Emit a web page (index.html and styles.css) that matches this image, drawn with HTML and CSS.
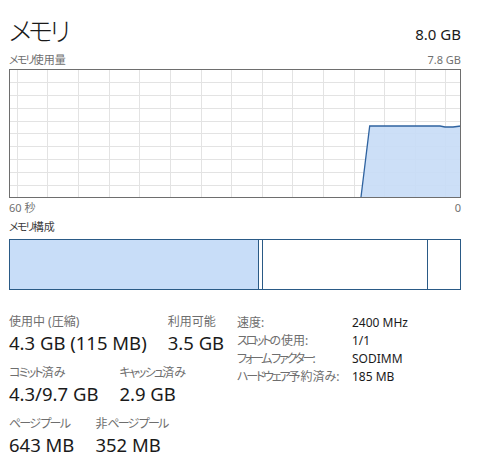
FILE: index.html
```html
<!DOCTYPE html>
<html lang="ja">
<head>
<meta charset="utf-8">
<link rel="stylesheet" href="styles.css">
</head>
<body>
<div class="page">
  <div class="head">
    <div class="title">メモリ</div>
    <div class="total">8.0 GB</div>
  </div>
  <div class="caption">
    <span><span class="kn">メモリ</span>使用量</span>
    <span>7.8 GB</span>
  </div>
  <svg class="graph" width="452" height="129" viewBox="0 0 452 129">
    <g class="grid">
      <line x1="8.5" y1="0" x2="8.5" y2="129"/>
      <line x1="38.5" y1="0" x2="38.5" y2="129"/>
      <line x1="69.5" y1="0" x2="69.5" y2="129"/>
      <line x1="100.5" y1="0" x2="100.5" y2="129"/>
      <line x1="130.5" y1="0" x2="130.5" y2="129"/>
      <line x1="161.5" y1="0" x2="161.5" y2="129"/>
      <line x1="192.5" y1="0" x2="192.5" y2="129"/>
      <line x1="222.5" y1="0" x2="222.5" y2="129"/>
      <line x1="253.5" y1="0" x2="253.5" y2="129"/>
      <line x1="283.5" y1="0" x2="283.5" y2="129"/>
      <line x1="314.5" y1="0" x2="314.5" y2="129"/>
      <line x1="345.5" y1="0" x2="345.5" y2="129"/>
      <line x1="375.5" y1="0" x2="375.5" y2="129"/>
      <line x1="406.5" y1="0" x2="406.5" y2="129"/>
      <line x1="436.5" y1="0" x2="436.5" y2="129"/>
      <line x1="0" y1="13.5" x2="452" y2="13.5"/>
      <line x1="0" y1="26.5" x2="452" y2="26.5"/>
      <line x1="0" y1="39.5" x2="452" y2="39.5"/>
      <line x1="0" y1="52.5" x2="452" y2="52.5"/>
      <line x1="0" y1="64.5" x2="452" y2="64.5"/>
      <line x1="0" y1="77.5" x2="452" y2="77.5"/>
      <line x1="0" y1="90.5" x2="452" y2="90.5"/>
      <line x1="0" y1="103.5" x2="452" y2="103.5"/>
      <line x1="0" y1="116.5" x2="452" y2="116.5"/>
    </g>
    <polygon class="area" points="352,128 360.7,57 431,57 436,58 444,58 452,57 452,128"/>
    <polyline class="curve" points="352,128 360.7,57 431,57 436,58 444,58 452,57"/>
    <rect class="frame" x="0.5" y="0.5" width="451" height="128"/>
  </svg>
  <div class="axis">
    <span>60 秒</span>
    <span>0</span>
  </div>
  <div class="section"><span class="kn">メモリ</span>構成</div>
  <div class="comp">
    <div class="seg inuse"></div>
    <div class="seg modified"></div>
    <div class="seg standby"></div>
    <div class="seg free"></div>
  </div>
  <div class="stats">
    <div class="left">
      <div class="row">
        <div class="stat"><div class="label">使用中 (圧縮)</div><div class="value">4.3 GB (115 MB)</div></div>
        <div class="stat"><div class="label">利用可能</div><div class="value">3.5 GB</div></div>
      </div>
      <div class="row">
        <div class="stat"><div class="label"><span class="kn">コミット</span>済み</div><div class="value">4.3/9.7 GB</div></div>
        <div class="stat"><div class="label"><span class="kn">キャッシュ</span>済み</div><div class="value">2.9 GB</div></div>
      </div>
      <div class="row">
        <div class="stat"><div class="label"><span class="kn">ページ プール</span></div><div class="value">643 MB</div></div>
        <div class="stat"><div class="label">非<span class="kn">ページ プール</span></div><div class="value">352 MB</div></div>
      </div>
    </div>
    <div class="right">
      <div class="k">速度:</div><div class="v">2400 MHz</div>
      <div class="k"><span class="kn">スロット</span>の使用:</div><div class="v">1/1</div>
      <div class="k"><span class="kn">フォーム ファクター</span>:</div><div class="v">SODIMM</div>
      <div class="k"><span class="kn">ハードウェア</span>予約済み:</div><div class="v">185 MB</div>
    </div>
  </div>
</div>
</body>
</html>
```
FILE: styles.css
```css
html, body {
  margin: 0;
  padding: 0;
  background: #ffffff;
}
body {
  font-family: "Noto Sans", "Noto Sans CJK JP", sans-serif;
  font-feature-settings: "palt";
  color: #000000;
}
.page {
  width: 452px;
  padding: 0 0 0 9px;
}
.kn {
  letter-spacing: -1.8px;
}
.head {
  display: flex;
  justify-content: space-between;
  align-items: flex-start;
  height: 52px;
  box-sizing: border-box;
}
.title {
  font-family: "Noto Sans CJK JP Light", "Noto Sans CJK JP", sans-serif;
  font-size: 26px;
  font-weight: 300;
  line-height: 36px;
  letter-spacing: -3.5px;
  color: #1a1a1a;
  margin-top: 12px;
}
.total {
  font-size: 15px;
  line-height: 20px;
  color: #1a1a1a;
  margin-top: 24px;
}
.caption, .axis {
  display: flex;
  justify-content: space-between;
  font-size: 11px;
  line-height: 16px;
  color: #707070;
}
.caption {
  height: 17px;
}
.graph {
  display: block;
}
.grid line {
  stroke: #e3e3e3;
  stroke-width: 1;
}
.area {
  fill: #c7dcf6;
  opacity: 0.9;
}
.curve {
  fill: none;
  stroke: #2f63a0;
  stroke-width: 1.3;
}
.frame {
  fill: none;
  stroke: #6e6e6e;
  stroke-width: 1;
}
.axis {
  height: 17px;
  padding-top: 2px;
}
.section {
  font-size: 11px;
  line-height: 16px;
  height: 20px;
  color: #3c3c3c;
  padding-top: 2px;
}
.comp {
  display: flex;
  height: 51px;
  box-sizing: border-box;
}
.seg {
  border: 1px solid #2a5a86;
  box-sizing: border-box;
  height: 51px;
  margin-left: -1px;
}
.seg:first-child {
  margin-left: 0;
}
.inuse {
  width: 250px;
  background: #c8ddf8;
}
.modified {
  width: 5px;
}
.standby {
  width: 166px;
}
.free {
  width: 34px;
}
.stats {
  display: flex;
  margin-top: 24px;
}
.left {
  width: 228px;
}
.row {
  display: flex;
  gap: 21px;
  margin-bottom: 9px;
}
.label {
  font-size: 12px;
  line-height: 16px;
  color: #6e6e6e;
  white-space: nowrap;
}
.value {
  font-size: 18.5px;
  line-height: 26px;
  color: #1a1a1a;
  white-space: nowrap;
}
.right {
  display: grid;
  grid-template-columns: 115px auto;
  row-gap: 1px;
  padding-top: 0;
  align-content: start;
  font-size: 12px;
  line-height: 17px;
  white-space: nowrap;
}
.right .kn {
  letter-spacing: -2.2px;
}
.k {
  color: #6e6e6e;
}
.v {
  color: #1a1a1a;
}
```
